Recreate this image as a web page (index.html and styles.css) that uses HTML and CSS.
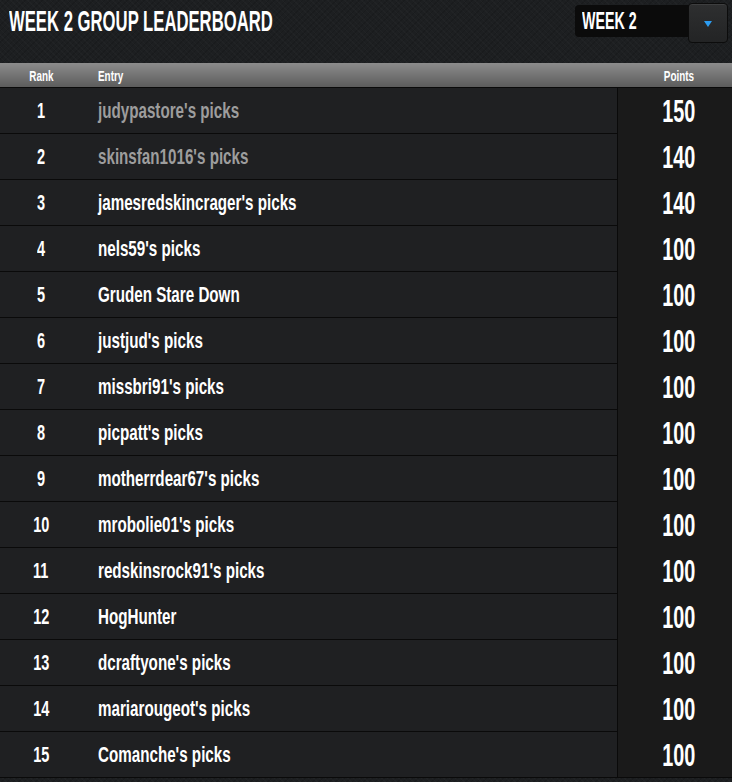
FILE: index.html
```html
<!DOCTYPE html>
<html>
<head>
<meta charset="utf-8">
<link rel="stylesheet" href="styles.css">
</head>
<body>
<div class="page">
  <header class="top">
    <h1 class="title"><span class="sq sq-title">WEEK 2 GROUP LEADERBOARD</span></h1>
    <div class="picker">
      <div class="picker-value"><span class="sq sq-week">WEEK 2</span></div>
      <div class="picker-btn"><span class="caret"></span></div>
    </div>
  </header>
  <div class="board">
    <div class="head">
      <div class="h-rank"><span class="sq sq-head c">Rank</span></div>
      <div class="h-entry"><span class="sq sq-head">Entry</span></div>
      <div class="h-points"><span class="sq sq-head c">Points</span></div>
    </div>
    <div class="rows">
      <div class="row"><div class="left"><div class="rank"><span class="sq sq-rank c">1</span></div><div class="entry muted"><span class="sq sq-entry">judypastore's picks</span></div></div><div class="pts"><span class="sq sq-pts c">150</span></div></div>
      <div class="row"><div class="left"><div class="rank"><span class="sq sq-rank c">2</span></div><div class="entry muted"><span class="sq sq-entry">skinsfan1016's picks</span></div></div><div class="pts"><span class="sq sq-pts c">140</span></div></div>
      <div class="row"><div class="left"><div class="rank"><span class="sq sq-rank c">3</span></div><div class="entry"><span class="sq sq-entry">jamesredskincrager's picks</span></div></div><div class="pts"><span class="sq sq-pts c">140</span></div></div>
      <div class="row"><div class="left"><div class="rank"><span class="sq sq-rank c">4</span></div><div class="entry"><span class="sq sq-entry">nels59's picks</span></div></div><div class="pts"><span class="sq sq-pts c">100</span></div></div>
      <div class="row"><div class="left"><div class="rank"><span class="sq sq-rank c">5</span></div><div class="entry"><span class="sq sq-entry">Gruden Stare Down</span></div></div><div class="pts"><span class="sq sq-pts c">100</span></div></div>
      <div class="row"><div class="left"><div class="rank"><span class="sq sq-rank c">6</span></div><div class="entry"><span class="sq sq-entry">justjud's picks</span></div></div><div class="pts"><span class="sq sq-pts c">100</span></div></div>
      <div class="row"><div class="left"><div class="rank"><span class="sq sq-rank c">7</span></div><div class="entry"><span class="sq sq-entry">missbri91's picks</span></div></div><div class="pts"><span class="sq sq-pts c">100</span></div></div>
      <div class="row"><div class="left"><div class="rank"><span class="sq sq-rank c">8</span></div><div class="entry"><span class="sq sq-entry">picpatt's picks</span></div></div><div class="pts"><span class="sq sq-pts c">100</span></div></div>
      <div class="row"><div class="left"><div class="rank"><span class="sq sq-rank c">9</span></div><div class="entry"><span class="sq sq-entry">motherrdear67's picks</span></div></div><div class="pts"><span class="sq sq-pts c">100</span></div></div>
      <div class="row"><div class="left"><div class="rank"><span class="sq sq-rank c">10</span></div><div class="entry"><span class="sq sq-entry">mrobolie01's picks</span></div></div><div class="pts"><span class="sq sq-pts c">100</span></div></div>
      <div class="row"><div class="left"><div class="rank"><span class="sq sq-rank c">11</span></div><div class="entry"><span class="sq sq-entry">redskinsrock91's picks</span></div></div><div class="pts"><span class="sq sq-pts c">100</span></div></div>
      <div class="row"><div class="left"><div class="rank"><span class="sq sq-rank c">12</span></div><div class="entry"><span class="sq sq-entry">HogHunter</span></div></div><div class="pts"><span class="sq sq-pts c">100</span></div></div>
      <div class="row"><div class="left"><div class="rank"><span class="sq sq-rank c">13</span></div><div class="entry"><span class="sq sq-entry">dcraftyone's picks</span></div></div><div class="pts"><span class="sq sq-pts c">100</span></div></div>
      <div class="row"><div class="left"><div class="rank"><span class="sq sq-rank c">14</span></div><div class="entry"><span class="sq sq-entry">mariarougeot's picks</span></div></div><div class="pts"><span class="sq sq-pts c">100</span></div></div>
      <div class="row"><div class="left"><div class="rank"><span class="sq sq-rank c">15</span></div><div class="entry"><span class="sq sq-entry">Comanche's picks</span></div></div><div class="pts"><span class="sq sq-pts c">100</span></div></div>
    </div>
  </div>
</div>
</body>
</html>
```
FILE: styles.css
```css
html, body {
  margin: 0;
  padding: 0;
}
body {
  background-color: #1d1f21;
  background-image:
    repeating-linear-gradient(45deg, rgba(255,255,255,0.018) 0 1px, transparent 1px 4px),
    repeating-linear-gradient(-45deg, rgba(0,0,0,0.12) 0 1px, transparent 1px 4px);
  font-family: "Liberation Sans", Arial, sans-serif;
  font-weight: bold;
  color: #fff;
  width: 732px;
  height: 782px;
  overflow: hidden;
}
.page {
  display: flex;
  flex-direction: column;
}
.sq {
  display: inline-block;
  white-space: nowrap;
  transform-origin: left center;
}
.sq.c {
  transform-origin: center center;
}
.sq-title { transform: scaleX(0.556); }
.sq-week { transform: scaleX(0.62); }
.sq-head { transform: scaleX(0.66); }
.sq-entry { transform: scaleX(0.69); }
.sq-rank { transform: scaleX(0.66); }
.sq-pts { transform: scaleX(0.62); }

.top {
  height: 63px;
  display: flex;
  justify-content: space-between;
  align-items: flex-start;
  box-sizing: border-box;
}
.title {
  margin: 6px 0 0 9px;
  font-size: 30px;
  line-height: 30px;
  font-weight: bold;
  letter-spacing: 0;
}
.picker {
  display: flex;
  align-items: flex-start;
  margin: 3px 4px 0 0;
}
.picker-value {
  margin-top: 2px;
  width: 118px;
  height: 32px;
  box-sizing: border-box;
  background: #0b0b0b;
  border-radius: 4px 0 0 4px;
  display: flex;
  align-items: center;
  padding-left: 7px;
  font-size: 23px;
  line-height: 23px;
}
.picker-btn {
  margin-left: -5px;
  width: 40px;
  height: 40px;
  box-sizing: border-box;
  border: 1px solid #0c0c0c;
  border-radius: 4px;
  background: linear-gradient(#2e2f30, #232425);
  box-shadow: inset 0 1px 0 rgba(255,255,255,0.08);
  display: flex;
  align-items: center;
  justify-content: center;
}
.caret {
  width: 0;
  height: 0;
  border-left: 4px solid transparent;
  border-right: 4px solid transparent;
  border-top: 6px solid #2d9cf0;
  margin-top: 1px;
}

.board {
  display: flex;
  flex-direction: column;
}
.head {
  height: 24px;
  border-bottom: 1px solid #0a0a0a;
  background: linear-gradient(#8c8c8c, #5c5c5c);
  display: grid;
  grid-template-columns: 82px 536px 1fr;
  align-items: center;
  font-size: 15px;
  line-height: 15px;
}
.h-rank { text-align: center; }
.h-entry { padding-left: 16px; }
.h-points { text-align: center; padding-left: 8px; }

.rows {
  display: flex;
  flex-direction: column;
}
.row {
  display: grid;
  grid-template-columns: 617px 1fr;
}
.left {
  height: 45px;
  border-bottom: 1px solid #0a0a0a;
  background: #1f2022;
  display: grid;
  grid-template-columns: 82px 1fr;
  align-items: center;
  font-size: 22px;
  line-height: 22px;
}
.rank { text-align: center; }
.entry { padding-left: 16px; }
.entry.muted { color: #9d9d9d; }
.pts {
  border-left: 1px solid #0a0a0a;
  background: #1a1a1a;
  display: flex;
  align-items: center;
  justify-content: center;
  padding-left: 8px;
  font-size: 32px;
  line-height: 32px;
}
.row:last-child .pts {
  border-bottom: 1px solid #0a0a0a;
}
```
